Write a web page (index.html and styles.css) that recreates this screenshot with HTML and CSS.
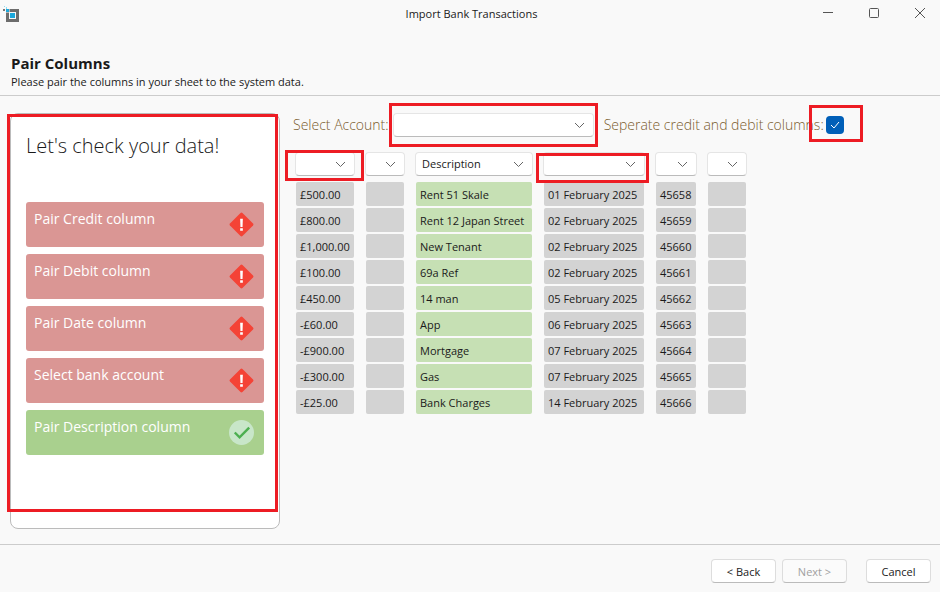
FILE: index.html
```
<!DOCTYPE html>
<html lang="en">

<head>
    <meta charset="UTF-8">
    <title>Import Bank Transactions</title>
    <link rel="stylesheet" href="styles.css">
</head>

<body>
    <header class="titlebar">
        <svg class="app-icon" width="16" height="16" viewBox="0 0 16 16" shape-rendering="crispEdges">
            <path fill="#6d6d6d" d="M3 3h13v13H3z" />
            <path fill="#b5b5b5" d="M3 3h4v4H3z" />
            <path fill="#f9f9f9" d="M6 6h7v7H6z" />
            <path fill="#1ba8dc" d="M7 7h5v5H7zM3 3h3v3H3z" />
            <path fill="#8fdcf2" d="M3 1h1v2H3zM1 0h1v1H1z" />
            <path fill="#777" d="M0 3h2v2H0z" />
        </svg>
        <span class="window-title">Import Bank Transactions</span>
        <div class="window-buttons">
            <button type="button" aria-label="Minimize">
                <svg width="12" height="12" viewBox="0 0 12 12"><path d="M1 5.5h10" /></svg>
            </button>
            <button type="button" aria-label="Maximize">
                <svg width="12" height="12" viewBox="0 0 12 12"><rect x="1.5" y="1.5" width="9" height="9" rx="1" /></svg>
            </button>
            <button type="button" aria-label="Close">
                <svg width="12" height="12" viewBox="0 0 12 12"><path d="M1 1l10 10M11 1L1 11" /></svg>
            </button>
        </div>
    </header>

    <section class="page-header">
        <h1>Pair Columns</h1>
        <p>Please pair the columns in your sheet to the system data.</p>
    </section>

    <main>
        <aside class="checks mark mark-checks">
            <h2>Let's check your data!</h2>
            <ul>
                <li class="failed">Pair Credit column
                    <svg width="25" height="25" viewBox="0 0 26 26"><use href="#icon-alert" /></svg>
                </li>
                <li class="failed">Pair Debit column
                    <svg width="25" height="25" viewBox="0 0 26 26"><use href="#icon-alert" /></svg>
                </li>
                <li class="failed">Pair Date column
                    <svg width="25" height="25" viewBox="0 0 26 26"><use href="#icon-alert" /></svg>
                </li>
                <li class="failed">Select bank account
                    <svg width="25" height="25" viewBox="0 0 26 26"><use href="#icon-alert" /></svg>
                </li>
                <li class="passed">Pair Description column
                    <svg width="25" height="25" viewBox="0 0 26 26"><use href="#icon-check" /></svg>
                </li>
            </ul>
        </aside>

        <div class="mapping">
            <div class="options">
                <label for="account">Select Account:</label>
                <span class="mark mark-account">
                    <select id="account" class="account"><option></option></select>
                </span>
                <label for="separate">Seperate credit and debit columns:</label>
                <span class="mark mark-separate">
                    <input type="checkbox" id="separate" checked>
                </span>
            </div>

            <table>
                <colgroup>
                    <col class="col-amount">
                    <col class="col-blank">
                    <col class="col-description">
                    <col class="col-date">
                    <col class="col-number">
                    <col class="col-blank">
                </colgroup>
                <thead>
                    <tr>
                        <th><div class="mark mark-amount"><select aria-label="Column 1"><option></option></select></div></th>
                        <th><div><select aria-label="Column 2"><option></option></select></div></th>
                        <th><div><select aria-label="Column 3"><option>Description</option></select></div></th>
                        <th><div class="mark mark-date"><select aria-label="Column 4"><option></option></select></div></th>
                        <th><div><select aria-label="Column 5"><option></option></select></div></th>
                        <th><div><select aria-label="Column 6"><option></option></select></div></th>
                    </tr>
                </thead>
                <tbody>
                    <tr><td>£500.00</td><td></td><td class="paired">Rent 51 Skale</td><td>01 February 2025</td><td>45658</td><td></td></tr>
                    <tr><td>£800.00</td><td></td><td class="paired">Rent 12 Japan Street</td><td>02 February 2025</td><td>45659</td><td></td></tr>
                    <tr><td>£1,000.00</td><td></td><td class="paired">New Tenant</td><td>02 February 2025</td><td>45660</td><td></td></tr>
                    <tr><td>£100.00</td><td></td><td class="paired">69a Ref</td><td>02 February 2025</td><td>45661</td><td></td></tr>
                    <tr><td>£450.00</td><td></td><td class="paired">14 man</td><td>05 February 2025</td><td>45662</td><td></td></tr>
                    <tr><td>-£60.00</td><td></td><td class="paired">App</td><td>06 February 2025</td><td>45663</td><td></td></tr>
                    <tr><td>-£900.00</td><td></td><td class="paired">Mortgage</td><td>07 February 2025</td><td>45664</td><td></td></tr>
                    <tr><td>-£300.00</td><td></td><td class="paired">Gas</td><td>07 February 2025</td><td>45665</td><td></td></tr>
                    <tr><td>-£25.00</td><td></td><td class="paired">Bank Charges</td><td>14 February 2025</td><td>45666</td><td></td></tr>
                </tbody>
            </table>
        </div>
    </main>

    <footer>
        <button type="button">&lt; Back</button>
        <button type="button" disabled>Next &gt;</button>
        <button type="button" class="cancel">Cancel</button>
    </footer>

    <svg class="icons" width="0" height="0">
        <symbol id="icon-alert" viewBox="0 0 26 26">
            <path fill="#f44336" d="M12 1q1-1 2 0l11 11q1 1 0 2L14 25q-1 1-2 0L1 14q-1-1 0-2z" />
            <path fill="#fff" d="M11.6 7h2.8l-.3 8.500h-2.200zM11.600 17h2.800v2.500h-2.800z" />
        </symbol>
        <symbol id="icon-check" viewBox="0 0 26 26">
            <circle cx="13" cy="13" r="13" fill="#c8e6c9" />
            <path fill="none" stroke="#4caf50" stroke-width="2.5" d="M6 13l5 5L21 8" />
        </symbol>
    </svg>
</body>

</html>
```
FILE: styles.css
```
* {
    box-sizing: border-box;
}

body {
    display: flex;
    flex-direction: column;
    min-height: 100vh;
    margin: 0;
    background-color: #f9f9f9;
    color: #1a1a1a;
    font-family: "Segoe UI", "Open Sans", "Noto Sans", sans-serif;
    font-size: 11px;
    line-height: 16px;
}

h1, h2, p, ul {
    margin: 0;
    padding: 0;
    font-weight: normal;
}

button, select, input {
    margin: 0;
    font: inherit;
    color: inherit;
}

/* window frame */
.titlebar {
    display: grid;
    grid-template-columns: 1fr auto 1fr;
    align-items: center;
    height: 28px;
    padding-left: 3px;
}

.window-buttons {
    display: flex;
    justify-content: flex-end;
    gap: 6px;
}

.window-buttons button {
    display: flex;
    align-items: center;
    justify-content: center;
    width: 40px;
    height: 28px;
    padding: 0 0 2px;
    border: none;
    background: none;
}

.window-buttons svg {
    fill: none;
    stroke: #555;
}

.page-header {
    padding: 26px 11px 5px;
    border-bottom: 1px solid #ccc;
}

.page-header h1 {
    margin-bottom: 2px;
    font-size: 15px;
    font-weight: bold;
    line-height: 18px;
}

main {
    display: flex;
    flex: 1;
    padding: 17px 10px 15px;
}

/* red outlines round the parts that need attention */
.mark {
    position: relative;
}

.mark::after {
    content: "";
    position: absolute;
    border: 3px solid #ed1c24;
    pointer-events: none;
}

.mark-checks::after {
    inset: 0 1px 16px -4px;
}

.mark-account::after {
    inset: -10px -4px;
}

.mark-separate::after {
    inset: -11px -19px -8px -17px;
}

.mark-amount::after {
    inset: -2px -9px -5px -10px;
}

.mark-date::after {
    inset: 1px -4px -7px -7px;
}

/* checklist */
.checks {
    flex: 0 0 270px;
    padding: 16px 15px;
    border: 1px solid #bbb;
    border-radius: 8px;
    background-color: #fff;
}

.checks h2 {
    margin-bottom: 40px;
    font-size: 20px;
    font-weight: 300;
    line-height: 32px;
}

.checks ul {
    display: flex;
    flex-direction: column;
    gap: 7px;
    list-style: none;
}

.checks li {
    display: flex;
    justify-content: space-between;
    height: 45px;
    padding: 7px 10px 7px 8px;
    border-radius: 3px;
    color: #fff;
    font-size: 14px;
    line-height: 20px;
}

.checks svg {
    align-self: center;
}

.failed {
    background-color: #da9694;
}

.passed {
    background-color: #a9d08e;
}

/* column mapping */
.mapping {
    flex: 1;
    padding-left: 4px;
}

.options {
    display: flex;
    align-items: center;
    height: 24px;
    padding-left: 9px;
    color: #7a5c2e;
    font-size: 14px;
    font-weight: 300;
}

.options span {
    display: flex;
    margin: 0 10px 0 4px;
}

.options .mark-separate {
    margin-left: 2px;
}

select {
    appearance: none;
    display: block;
    width: 100%;
    height: 24px;
    padding: 0 26px 0 6px;
    border: 1px solid #e5e5e5;
    border-bottom-color: #bbb;
    border-radius: 4px;
    background: #fff url("data:image/svg+xml,%3Csvg xmlns='http://www.w3.org/2000/svg' width='11' height='7'%3E%3Cpath d='M1 1l4.5 4.5L10 1' fill='none' stroke='%23666'/%3E%3C/svg%3E") no-repeat right 8px center;
}

.account {
    width: 201px;
}

input[type="checkbox"] {
    appearance: none;
    width: 18px;
    height: 18px;
    border-radius: 4px;
    background: #005fb8 url("data:image/svg+xml,%3Csvg xmlns='http://www.w3.org/2000/svg' width='10' height='8'%3E%3Cpath d='M1 4l3 3 5-6' fill='none' stroke='white'/%3E%3C/svg%3E") no-repeat center;
}

table {
    table-layout: fixed;
    width: 474px;
    margin-top: 13px;
    border-spacing: 12px 2px;
}

.col-amount {
    width: 58px;
}

.col-blank {
    width: 38px;
}

.col-description {
    width: 116px;
}

.col-date {
    width: 100px;
}

.col-number {
    width: 40px;
}

th {
    padding: 0 0 4px;
    font-weight: normal;
}

th div {
    margin: 0 -1px;
}

td {
    height: 24px;
    padding: 2px 4px 0;
    border-radius: 2px;
    background-color: #d3d3d3;
    white-space: nowrap;
}

td.paired {
    background-color: #c6e0b4;
}

/* wizard buttons */
footer {
    display: flex;
    justify-content: flex-end;
    gap: 6px;
    padding: 14px 9px 9px;
    border-top: 1px solid #ccc;
}

footer button {
    width: 65px;
    height: 24px;
    padding: 2px 0 0;
    border: 1px solid #ddd;
    border-bottom-color: #bbb;
    border-radius: 4px;
    background-color: #fff;
}

footer button:disabled {
    background-color: #fbfbfb;
    color: #a0a0a0;
}

footer .cancel {
    margin-left: 13px;
}

.icons {
    position: absolute;
}
```
